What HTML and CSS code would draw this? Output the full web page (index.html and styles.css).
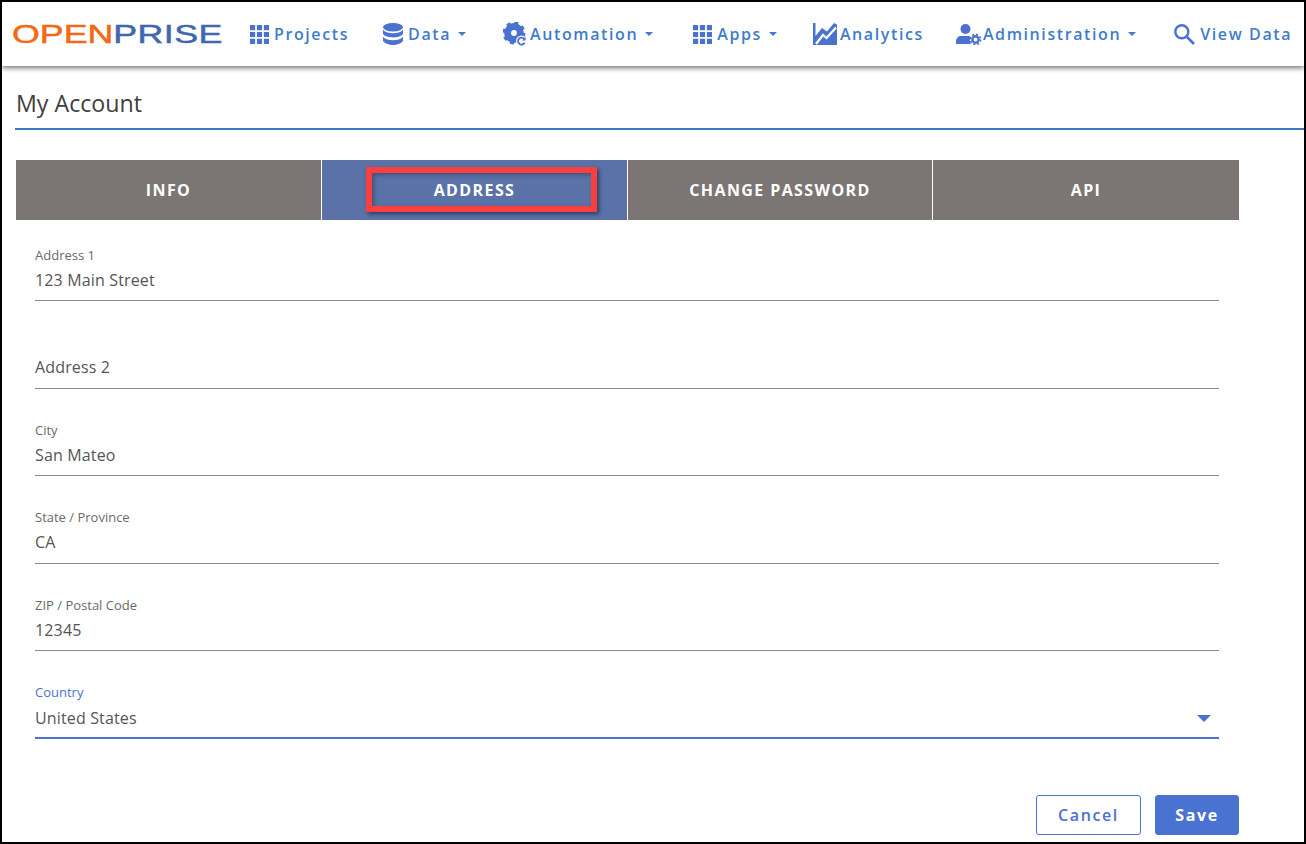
FILE: index.html
```html
<!DOCTYPE html>
<html lang="en">
<head>
<meta charset="utf-8">
<title>My Account</title>
<link rel="stylesheet" href="styles.css">
</head>
<body>
<div class="frame">
  <header class="navbar">
    <div class="logo"><span class="logo-text"><span class="logo-open">OPEN</span><span class="logo-prise">PRISE</span></span></div>
    <nav class="nav">
      <a class="nav-item nav-projects">
        <svg class="ico ico-grid" viewBox="0 0 20 20"><path d="M0 0h5.400v5.400H0zM7.300 0h5.400v5.400H7.300zM14.600 0H20v5.400h-5.400zM0 7.300h5.400v5.400H0zM7.300 7.300h5.400v5.400H7.300zM14.600 7.300H20v5.400h-5.400zM0 14.600h5.400V20H0zM7.300 14.600h5.400V20H7.300zM14.600 14.600H20V20h-5.400z"/></svg>
        <span>Projects</span>
      </a>
      <a class="nav-item nav-data">
        <svg class="ico ico-db" viewBox="0 0 20 22"><ellipse cx="10" cy="4.200" rx="10" ry="4.200"/><path d="M0 6.800c2 2.600 6 3.400 10 3.400s8-.8 10-3.400v4c-1.500 2.800-6 3.600-10 3.600S1.500 13.600 0 10.800z"/><path d="M0 13.800c2 2.600 6 3.400 10 3.400s8-.8 10-3.400v4c-1.500 2.800-6 4.200-10 4.200S1.500 20.600 0 17.800z"/></svg>
        <span>Data</span><i class="caret"></i>
      </a>
      <a class="nav-item nav-auto">
        <svg class="ico ico-gear" viewBox="0 0 24 24">
          <circle cx="11" cy="11" r="6.400" fill="none" stroke="currentColor" stroke-width="7"/>
          <circle cx="11" cy="11" r="9.800" fill="none" stroke="currentColor" stroke-width="3.400" stroke-dasharray="3.800 3.900"/>
          <circle cx="18.500" cy="19" r="5.500" fill="#fff"/>
          <path d="M21.600 20.800a3.500 3.500 0 1 1 -.3 -3.900" fill="none" stroke="currentColor" stroke-width="1.800"/>
          <path d="M22.600 14.800v3.600H19z"/>
        </svg>
        <span>Automation</span><i class="caret"></i>
      </a>
      <a class="nav-item nav-apps">
        <svg class="ico ico-grid" viewBox="0 0 20 20"><path d="M0 0h5.400v5.400H0zM7.300 0h5.400v5.400H7.300zM14.600 0H20v5.400h-5.400zM0 7.300h5.400v5.400H0zM7.300 7.300h5.400v5.400H7.300zM14.600 7.300H20v5.400h-5.400zM0 14.600h5.400V20H0zM7.300 14.600h5.400V20H7.300zM14.600 14.600H20V20h-5.400z"/></svg>
        <span>Apps</span><i class="caret"></i>
      </a>
      <a class="nav-item nav-analytics">
        <svg class="ico ico-chart" viewBox="0 0 24 22"><path d="M0 0h2.500v13L9 5l5 3.500L21 0l3 1.500V22H0z"/><path d="M3 21l7-9 3.500 3L23 4.500" fill="none" stroke="#fff" stroke-width="2.300"/></svg>
        <span>Analytics</span>
      </a>
      <a class="nav-item nav-admin">
        <svg class="ico ico-admin" viewBox="0 0 26 21">
          <circle cx="9.500" cy="5" r="5"/>
          <path d="M0 20v-2.500c0-3.500 2.500-5.500 5-5.500h7c1.500 0 2.500.6 3 1.500-1.500 2-1.500 4.500 0 6.500z"/>
          <circle cx="19.500" cy="15.500" r="3.200" fill="none" stroke="currentColor" stroke-width="2.400"/>
          <circle cx="19.500" cy="15.500" r="5.100" fill="none" stroke="currentColor" stroke-width="1.800" stroke-dasharray="2 2"/>
        </svg>
        <span>Administration</span><i class="caret"></i>
      </a>
      <a class="nav-item nav-view">
        <svg class="ico ico-search" viewBox="0 0 21 21"><circle cx="7.800" cy="7.800" r="6.500" fill="none" stroke="currentColor" stroke-width="2.400"/><path d="M12.500 12.500l7.500 7.500" fill="none" stroke="currentColor" stroke-width="2.600"/></svg>
        <span>View Data</span>
      </a>
    </nav>
  </header>

  <main class="content">
    <h1 class="title">My Account</h1>
    <div class="tabs">
      <div class="tab">INFO</div>
      <div class="tab tab-active">ADDRESS<div class="callout"></div></div>
      <div class="tab">CHANGE PASSWORD</div>
      <div class="tab">API</div>
    </div>
    <form class="form">
      <div class="field"><label class="label">Address 1</label><div class="value">123 Main Street</div></div>
      <div class="field"><label class="label"></label><div class="value">Address 2</div></div>
      <div class="field"><label class="label">City</label><div class="value">San Mateo</div></div>
      <div class="field"><label class="label">State / Province</label><div class="value">CA</div></div>
      <div class="field"><label class="label">ZIP / Postal Code</label><div class="value">12345</div></div>
      <div class="field field-focus"><label class="label">Country</label><div class="value">United States<i class="select-arrow"></i></div></div>
    </form>
    <div class="actions">
      <button class="btn btn-outline" type="button">Cancel</button>
      <button class="btn btn-solid" type="button">Save</button>
    </div>
  </main>
</div>
</body>
</html>
```
FILE: styles.css
```css
* { box-sizing: border-box; }
html, body { margin: 0; padding: 0; height: 100%; }
body { background: #fff; font-family: "Open Sans", sans-serif; color: #4a4a4a; overflow: hidden; }
.frame { width: 1306px; height: 844px; border: 2px solid #000; overflow: hidden; background: #fff; }

.navbar { height: 64px; display: flex; align-items: center; background: #fff; box-shadow: 0 2px 5px rgba(0,0,0,.55); position: relative; }
.logo { width: 248px; flex: none; padding-left: 10px; }
.logo-text { display: inline-block; font-family: "Liberation Sans", sans-serif; font-size: 26px; line-height: 26px; transform-origin: left center; transform: scale(1.375, .98); -webkit-text-stroke: .5px currentColor; }
.logo-open { color: #f26a14; }
.logo-prise { color: #3f68b0; letter-spacing: .3px; }

.nav { display: flex; align-items: center; height: 100%; }
.nav-item { display: flex; align-items: center; color: #3f7ccb; font-size: 16px; font-weight: 600; letter-spacing: 1.6px; white-space: nowrap; }
.nav-data { margin-left: 34px; }
.nav-auto { margin-left: 37px; }
.nav-apps { margin-left: 40px; }
.nav-analytics { margin-left: 36px; }
.nav-admin { margin-left: 32px; }
.nav-view { margin-left: 38px; }

.ico { fill: #4a72d0; color: #4a72d0; flex: none; display: block; }
.ico-grid { width: 19px; height: 19px; margin-right: 5px; }
.ico-db { width: 20px; height: 22px; margin-right: 5px; }
.ico-gear { width: 24px; height: 24px; margin-right: 3px; }
.ico-chart { width: 24px; height: 22px; margin-right: 3px; }
.ico-admin { width: 26px; height: 21px; margin-right: 1px; }
.ico-search { width: 21px; height: 21px; margin-right: 5px; }
.caret { display: inline-block; width: 0; height: 0; margin-left: 7px; border-left: 4px solid transparent; border-right: 4px solid transparent; border-top: 4px solid #3f7ccb; }

.content { padding-left: 13px; }
.title { margin: 0; height: 64px; padding: 21px 0 0 1px; font-size: 23.2px; line-height: 32px; font-weight: 500; color: #404040; border-bottom: 2px solid #3a78c2; }

.tabs { display: grid; grid-template-columns: 305px 305px 304px 306px; gap: 1px; width: 1223px; height: 60px; margin: 30px 0 0 1px; }
.tab { position: relative; display: flex; align-items: center; justify-content: center; background: #7b7573; color: #fff; font-size: 16px; font-weight: 700; letter-spacing: 1.4px; }
.tab-active { background: #5a72a8; }
.callout { position: absolute; left: 44px; top: 7px; width: 231px; height: 45px; border: 6px solid #f9403f; box-shadow: 2px 2px 4px rgba(20,30,60,.65), inset 2px 2px 4px rgba(20,30,60,.4); }

.form { width: 1184px; margin-left: 20px; }
.field { height: 87.5px; padding-top: 26.8px; position: relative; }
.label { display: block; height: 17px; font-size: 13px; line-height: 16px; color: #6a6a6a; }
.value { position: relative; height: 37.4px; font-size: 16px; line-height: 32px; letter-spacing: .15px; color: #555; border-bottom: 1px solid #8a8a8a; }
.field-focus .label { color: #4a72d0; }
.field-focus .value { line-height: 34px; border-bottom: 2px solid #4a72d0; }
.select-arrow { position: absolute; right: 8px; top: 14px; width: 0; height: 0; border-left: 7px solid transparent; border-right: 7px solid transparent; border-top: 7px solid #4a72d0; }

.actions { display: flex; justify-content: flex-end; gap: 14px; width: 1224px; margin-top: 50px; }
.btn { height: 40px; border-radius: 3px; font-family: "Open Sans", sans-serif; font-size: 16px; font-weight: 600; letter-spacing: 1.6px; padding: 0; }
.btn-outline { width: 105px; background: #fff; border: 1px solid #4a72d0; color: #4a72d0; }
.btn-solid { width: 84px; background: #4a72d0; border: 1px solid #4a72d0; color: #fff; font-weight: 700; }
```
